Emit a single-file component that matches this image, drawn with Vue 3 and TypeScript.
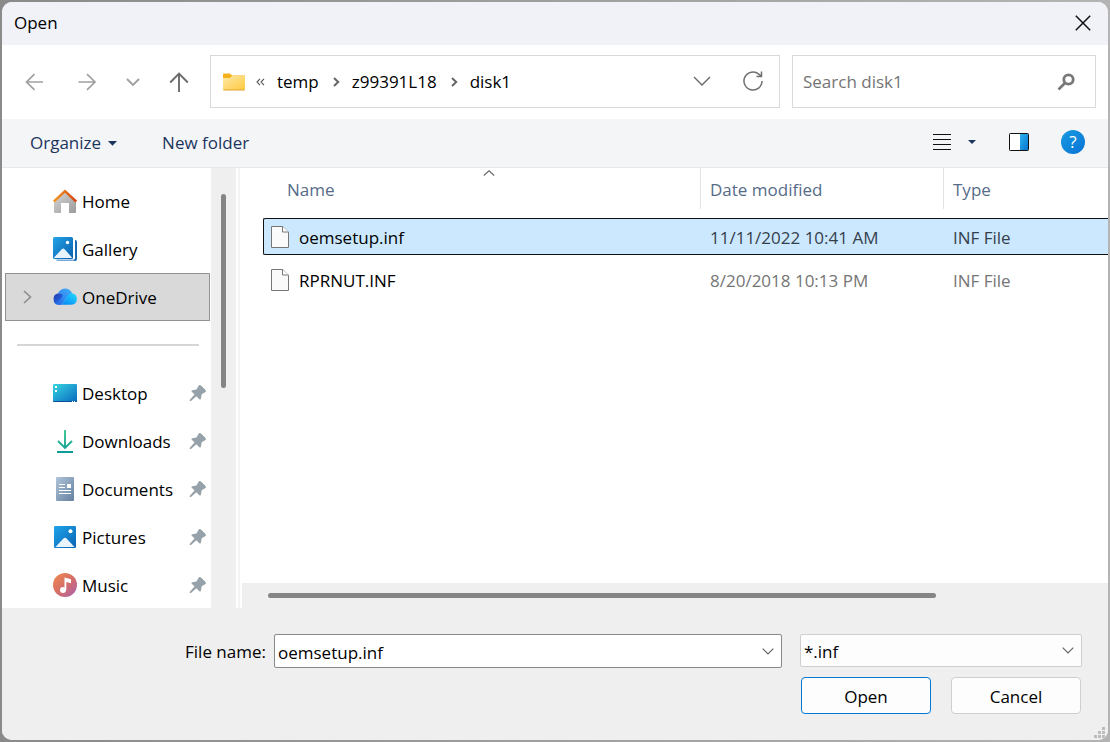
<script setup lang="ts">
import { ref } from 'vue'

interface Place {
  name: string
  icon: string
  pinned: boolean
}
interface FileRow {
  name: string
  modified: string
  type: string
}

const topPlaces: Place[] = [
  { name: 'Home', icon: 'home', pinned: false },
  { name: 'Gallery', icon: 'gallery', pinned: false },
  { name: 'OneDrive', icon: 'cloud', pinned: false },
]
const pinnedPlaces: Place[] = [
  { name: 'Desktop', icon: 'desktop', pinned: true },
  { name: 'Downloads', icon: 'downloads', pinned: true },
  { name: 'Documents', icon: 'documents', pinned: true },
  { name: 'Pictures', icon: 'pictures', pinned: true },
  { name: 'Music', icon: 'music', pinned: true },
]
const groups = [topPlaces, pinnedPlaces]
const crumbs = ['temp', 'z99391L18', 'disk1']
const files: FileRow[] = [
  { name: 'oemsetup.inf', modified: '11/11/2022 10:41 AM', type: 'INF File' },
  { name: 'RPRNUT.INF', modified: '8/20/2018 10:13 PM', type: 'INF File' },
]

const place = ref('OneDrive')
const fileName = ref('oemsetup.inf')
const filter = ref('*.inf')
const query = ref('')
</script>

<template>
  <div class="frame">
    <div class="dialog" role="dialog" aria-labelledby="dialog-title">
      <header class="titlebar">
        <h1 id="dialog-title">Open</h1>
        <button class="close" type="button" aria-label="Close">
          <svg width="16" height="16" viewBox="0 0 16 16"><path d="M.8.8l14.400 14.400M15.200.8L.8 15.200" stroke="#111" stroke-width="1.500" fill="none" /></svg>
        </button>
      </header>

      <div class="navbar">
        <div class="arrows">
          <button type="button" aria-label="Back">
            <svg width="20" height="20" viewBox="0 0 20 20" fill="none" stroke="#a0a0a0" stroke-width="1.700"><path d="M19 10H2.500M10.500 2.200L2.500 10l8 7.800" /></svg>
          </button>
          <button type="button" aria-label="Forward">
            <svg width="20" height="20" viewBox="0 0 20 20" fill="none" stroke="#a0a0a0" stroke-width="1.700"><path d="M1.500 10H18M10 2.200l8 7.800-8 7.800" /></svg>
          </button>
          <button type="button" aria-label="Recent locations">
            <svg width="14" height="20" viewBox="0 0 14 20" fill="none" stroke="#a0a0a0" stroke-width="1.900"><path d="M1 7l6 6 6-6" /></svg>
          </button>
          <button type="button" aria-label="Up">
            <svg width="20" height="20" viewBox="0 0 20 20" fill="none" stroke="#6b6b6b" stroke-width="1.900"><path d="M10 20V1.500M1.200 10.500L10 1.600l8.800 8.900" /></svg>
          </button>
        </div>
        <nav class="address" aria-label="Address">
          <svg class="folder" width="22" height="18" viewBox="0 0 22 18">
            <defs><linearGradient id="fold" x1="0" y1="0" x2="1" y2="1"><stop offset="0" stop-color="#ffe9a6" /><stop offset="1" stop-color="#fdc93f" /></linearGradient></defs>
            <path d="M0 1.500Q0 .5 1 .5h6l2 2h13v4H0z" fill="#f5b01c" />
            <path d="M0 5h7l2-2h13v13q0 1-1 1H1q-1 0-1-1z" fill="url(#fold)" />
            <path d="M.3 17h21.400" stroke="#e0a32c" />
          </svg>
          <svg class="more" width="9" height="8" viewBox="0 0 9 8" fill="none" stroke="#555" stroke-width="1.100"><path d="M4 .8L1 4l3 3.200M8 .8L5 4l3 3.200" /></svg>
          <template v-for="(crumb, i) in crumbs" :key="crumb">
            <svg v-if="i > 0" class="sep" width="7" height="10" viewBox="0 0 7 10" fill="none" stroke="#666" stroke-width="2"><path d="M1 1l4.200 4L1 9" /></svg>
            <button type="button" class="crumb">{{ crumb }}</button>
          </template>
          <button type="button" class="history" aria-label="Previous locations">
            <svg width="18" height="12" viewBox="0 0 18 12" fill="none" stroke="#666" stroke-width="1.300"><path d="M1 1l8 8 8-8" /></svg>
          </button>
          <button type="button" class="refresh" aria-label="Refresh">
            <svg width="20" height="22" viewBox="0 0 20 22" fill="none" stroke="#707070" stroke-width="1.500"><path d="M19 10a9 9 0 1 1-3.200-6.900L18.200 5M18.500.5V5.500H13.500" /></svg>
          </button>
        </nav>
        <div class="search">
          <input v-model="query" type="search" placeholder="Search disk1" aria-label="Search disk1" />
          <svg width="18" height="18" viewBox="0 0 18 18" fill="none" stroke="#777"><circle cx="11.500" cy="6.500" r="4.700" stroke-width="2.800" /><path d="M8 10l-6.500 6.500" stroke-width="2.700" /></svg>
        </div>
      </div>

      <div class="commands">
        <button type="button" class="organize">Organize
          <svg width="9" height="5" viewBox="0 0 9 5"><path d="M0 0h9L4.500 4.800z" fill="#1c355e" /></svg>
        </button>
        <button type="button">New folder</button>
        <div class="tools">
          <button type="button" class="view" aria-label="Change your view">
            <svg width="18" height="18" viewBox="0 0 18 18"><path d="M0 1.500h18M0 6.500h18M0 11.500h18M0 16.500h18" stroke="#111" /></svg>
            <svg width="8" height="4" viewBox="0 0 8 4"><path d="M0 0h8L4 4z" fill="#1c355e" /></svg>
          </button>
          <button type="button" class="preview" aria-label="Show the preview pane">
            <svg width="20" height="18" viewBox="0 0 20 18">
              <defs><linearGradient id="pane" x1="0" y1="0" x2="1" y2="1"><stop offset="0" stop-color="#2cb4ee" /><stop offset="1" stop-color="#0675d1" /></linearGradient></defs>
              <rect x=".5" y=".5" width="19" height="17" rx=".8" fill="#fff" stroke="#111" />
              <path d="M11 1h8v16h-8z" fill="url(#pane)" />
            </svg>
          </button>
          <button type="button" class="help" aria-label="Help">?</button>
        </div>
      </div>

      <main class="body">
        <aside class="sidebar">
          <nav class="places" aria-label="Places">
            <template v-for="(group, g) in groups" :key="g">
              <hr v-if="g > 0" />
              <button
                v-for="p in group"
                :key="p.name"
                type="button"
                class="place"
                :class="{ current: p.name === place }"
                @click="place = p.name"
              >
                <span class="expander">
                  <svg v-if="p.icon === 'cloud'" width="9" height="14" viewBox="0 0 9 14" fill="none" stroke="#8c8c8c" stroke-width="1.600"><path d="M1 1l6.500 6L1 13" /></svg>
                </span>
                <svg class="icon" width="24" height="24" viewBox="0 0 24 24">
                  <g v-if="p.icon === 'home'">
                    <defs>
                      <linearGradient id="wall" x1="0" y1="0" x2="1" y2="1"><stop offset="0" stop-color="#d8d8d8" /><stop offset="1" stop-color="#9a9a9a" /></linearGradient>
                      <linearGradient id="roof"><stop offset="0" stop-color="#f59a24" /><stop offset="1" stop-color="#d54410" /></linearGradient>
                    </defs>
                    <path d="M1 11.500L12 2l11 9.500V23q0 1-1 1h-6V14H8v10H2q-1 0-1-1z" fill="url(#wall)" />
                    <path d="M.8 12.500L12 2.200l11.200 10.300" fill="none" stroke="url(#roof)" stroke-width="2.400" />
                  </g>
                  <g v-else-if="p.icon === 'gallery'">
                    <defs><linearGradient id="sky" x1="0" y1="0" x2="1" y2="1"><stop offset="0" stop-color="#20a4e8" /><stop offset="1" stop-color="#0c5ead" /></linearGradient></defs>
                    <path d="M22 3q2 0 2 1.500v17.500q0 2-2 2h-1V3z" fill="#1768b5" />
                    <path d="M3 22.500h19l-1 1.500H5q-1.500 0-2-1.500z" fill="#75a7d8" />
                    <path d="M1.500 0h17Q20 0 20 1.500v19q0 1.500-1.500 1.500h-17Q0 22 0 20.500v-19Q0 0 1.500 0z" fill="url(#sky)" />
                    <path d="M20 0h2v22h-2z" fill="#fff" />
                    <path d="M1 20.500l8-8.500q1.200-1.200 2.400 0l7.600 8.500q-.5.500-1 .5H2q-.5 0-1-.5z" fill="#e8f3fd" />
                    <circle cx="14.500" cy="5.500" r="1.700" fill="#fff" />
                  </g>
                  <g v-else-if="p.icon === 'cloud'">
                    <defs>
                      <linearGradient id="cloudLeft" x1="0" y1="0" x2="1" y2="1"><stop offset="0" stop-color="#1c3fae" /><stop offset="1" stop-color="#2f74f5" /></linearGradient>
                      <linearGradient id="cloudTop" x1="1" y1="0" x2="0" y2="1"><stop offset="0" stop-color="#45b4fb" /><stop offset="1" stop-color="#1e62e6" /></linearGradient>
                      <linearGradient id="cloudFront" x1="1" y1="0" x2="0" y2="1"><stop offset="0" stop-color="#22dcff" /><stop offset="1" stop-color="#067cf5" /></linearGradient>
                    </defs>
                    <path d="M5.800 19.800A5.800 5.800 0 0 1 5.500 8.300H12l-4 11.500z" fill="url(#cloudLeft)" />
                    <path d="M5 8.400C8 2 16.500 1.800 19.200 8.300l-5.700 4.200L10 18q-1.500 1.800-4.200 1.800-3 0-4.600-2.300Q6 17 9 12q2-3.500-4-3.600z" fill="url(#cloudTop)" />
                    <path d="M6 19.800q3 0 5-3.300l3-5q2-3.200 5-3.200a5.800 5.800 0 0 1-.5 11.500z" fill="url(#cloudFront)" />
                  </g>
                  <g v-else-if="p.icon === 'desktop'">
                    <defs><linearGradient id="desk" x1="0" y1="0" x2="1" y2="1"><stop offset="0" stop-color="#38d5e2" /><stop offset="1" stop-color="#0869bf" /></linearGradient></defs>
                    <rect y="3" width="24" height="18" rx="1" fill="url(#desk)" />
                    <path d="M0 20h24q0 1-1 1H1q-1 0-1-1z" fill="#075095" />
                    <path d="M2 5h2v2H2zM2 9h2v2H2zM19 20h1v1h-1zM21 20h1v1h-1z" fill="#fff" />
                  </g>
                  <g v-else-if="p.icon === 'downloads'" fill="none" stroke-width="1.900">
                    <defs><linearGradient id="down" x1="0" y1="0" x2="0" y2="24" gradientUnits="userSpaceOnUse"><stop offset="0" stop-color="#41c98e" /><stop offset="1" stop-color="#0b9b98" /></linearGradient></defs>
                    <path d="M12 1V19M5 12l7 7 7-7M4 23h16" stroke="url(#down)" />
                  </g>
                  <g v-else-if="p.icon === 'documents'">
                    <defs><linearGradient id="doc" x1="0" y1="0" x2="1" y2="1"><stop offset="0" stop-color="#afc4da" /><stop offset="1" stop-color="#65809f" /></linearGradient></defs>
                    <rect x="3" width="18" height="24" rx="1" fill="url(#doc)" />
                    <path d="M6 7.500h6M6 10.500h6M6 13.500h12M6 16.500h12" stroke="#fff" />
                    <path d="M14 7h4v4h-4z" fill="#fff" />
                  </g>
                  <g v-else-if="p.icon === 'pictures'">
                    <defs><linearGradient id="pic" x1="0" y1="0" x2="1" y2="1"><stop offset="0" stop-color="#1fa5e9" /><stop offset="1" stop-color="#0b62b5" /></linearGradient></defs>
                    <rect x="1" y="1" width="22" height="22" rx="1.200" fill="url(#pic)" />
                    <path d="M2.500 22l8-8.500q1.500-1.300 3 0l8 8.500z" fill="#eaf4fd" />
                    <circle cx="17.500" cy="6.300" r="2" fill="#fff" />
                  </g>
                  <g v-else>
                    <defs><linearGradient id="music" x1="0" y1="0" x2="1" y2="1"><stop offset="0" stop-color="#f18b4d" /><stop offset=".5" stop-color="#d66f67" /><stop offset="1" stop-color="#a85fb0" /></linearGradient></defs>
                    <circle cx="12" cy="12" r="12" fill="url(#music)" />
                    <circle cx="10" cy="17" r="3" fill="#fff" />
                    <path d="M11.500 17V4.500l6.500 1.700v4l-4.700-1.200V17z" fill="#fff" />
                  </g>
                </svg>
                <span class="label">{{ p.name }}</span>
                <svg v-if="p.pinned" class="pin" width="18" height="18" viewBox="0 0 18 18"><path d="M9.700 1.500Q11 .5 12 1.500L16.500 6q1 1 0 2l-3.800 2.200-.8 4.500q-.5 1.500-1.600.5L7.300 12.300 2 17H.8v-1.200L5.500 10.500 2.800 7.800q-1-1 .4-1.500L7.500 5.500z" fill="#96a1a9" /></svg>
              </button>
            </template>
          </nav>
          <div class="vtrack"><div class="vthumb"></div></div>
        </aside>

        <section class="content" aria-label="Files">
          <div class="listing">
            <table>
              <colgroup><col /><col class="c-date" /><col class="c-type" /></colgroup>
              <thead>
                <tr>
                  <th scope="col" aria-sort="ascending">
                    <div class="head first">Name
                      <svg class="sort" width="12" height="6" viewBox="0 0 12 6" fill="none" stroke="#666" stroke-width="1.100"><path d="M.8 5.500L6 .8l5.200 4.700" /></svg>
                    </div>
                  </th>
                  <th scope="col"><div class="head">Date modified</div></th>
                  <th scope="col"><div class="head last">Type</div></th>
                </tr>
              </thead>
              <tbody>
                <tr v-for="f in files" :key="f.name" :class="{ selected: f.name === fileName }" @click="fileName = f.name">
                  <td>
                    <div class="cell file">
                      <svg width="18" height="22" viewBox="0 0 18 22"><path d="M.5.5h11.200l5.800 5.800v15.200H.5z" fill="#fafafa" stroke="#767676" /><path d="M11.500.5v5.500h6" fill="#fff" stroke="#767676" /></svg>
                      <span class="file-name">{{ f.name }}</span>
                    </div>
                  </td>
                  <td><div class="cell meta">{{ f.modified }}</div></td>
                  <td><div class="cell meta">{{ f.type }}</div></td>
                </tr>
              </tbody>
            </table>
          </div>
          <div class="htrack"><div class="hthumb"></div></div>
        </section>
      </main>

      <footer class="footer">
        <div class="fields">
          <label class="name-label" for="file-name">File name:</label>
          <div class="combo">
            <input id="file-name" v-model="fileName" type="text" />
            <button type="button" aria-label="Recent file names">
              <svg width="12" height="7" viewBox="0 0 12 7" fill="none" stroke="#666" stroke-width="1.200"><path d="M.7.7L6 6 11.300.7" /></svg>
            </button>
          </div>
          <div class="filter">
            <select v-model="filter" aria-label="File type"><option>*.inf</option></select>
            <svg width="12" height="7" viewBox="0 0 12 7" fill="none" stroke="#666" stroke-width="1.200"><path d="M.7.7L6 6 11.300.7" /></svg>
          </div>
        </div>
        <div class="actions">
          <button type="button" class="primary">Open</button>
          <button type="button">Cancel</button>
        </div>
        <svg class="grip" width="12" height="12" viewBox="0 0 12 12"><path d="M8 0h3v3H8zM4 4h3v3H4zM8 4h3v3H8zM0 8h3v3H0zM4 8h3v3H4zM8 8h3v3H8z" fill="#bdbdbd" /></svg>
      </footer>
    </div>
  </div>
</template>

<style>
body {
  margin: 0;
  background: #b4b4b4;
}
</style>

<style scoped>
* {
  box-sizing: border-box;
}
.frame {
  display: flex;
  height: 100vh;
  min-height: 480px;
  padding: 2px;
  background: linear-gradient(90deg, #8a8a8a, #b4b4b4);
  font-family: "Open Sans", "Noto Sans", sans-serif;
  font-size: 17px;
  line-height: 24px;
  color: #000;
}
.dialog {
  display: flex;
  flex: 1;
  flex-direction: column;
  min-width: 0;
  overflow: hidden;
  border-radius: 10px;
  background: #fff;
}
button, input, select {
  margin: 0;
  padding: 0;
  border: 0;
  background: none;
  color: inherit;
  font: inherit;
}
svg {
  display: block;
  flex: none;
}
.titlebar {
  display: flex;
  align-items: center;
  justify-content: space-between;
  height: 43px;
  flex: none;
  padding: 0 17px 2px 12px;
  background: #f0f2f8;
}
h1 {
  margin: 0;
  font: inherit;
}
.navbar {
  display: grid;
  grid-template-columns: 208px minmax(0, 570fr) minmax(0, 316fr);
  flex: none;
  align-items: center;
  height: 74px;
  padding: 0 12px 1px 0;
}
.arrows {
  display: flex;
  align-items: center;
  padding-left: 22px;
  gap: 33px;
}
.arrows button:nth-child(3) {
  margin-left: -4px;
  margin-right: -4px;
}
.address, .search {
  display: flex;
  align-items: center;
  height: 53px;
  border: 1px solid #d9d9d9;
}
.address {
  padding: 0 16px 0 12px;
}
.more {
  margin-left: 11px;
  margin-right: 12px;
}
.sep {
  margin: 0 12px 0 14px;
}
.history {
  margin-left: auto;
}
.refresh {
  margin-left: 32px;
}
.search {
  margin-left: 12px;
  padding: 0 20px 0 10px;
}
.search input {
  flex: 1;
  min-width: 0;
  outline: none;
  appearance: none;
}
.search input::placeholder {
  color: #757575;
  opacity: 1;
}
.commands {
  display: flex;
  align-items: center;
  flex: none;
  height: 49px;
  padding: 0 23px 0 28px;
  border-bottom: 1px solid #e6e7e9;
  background: #f4f5f7;
  color: #1c355e;
}
.organize, .view {
  display: flex;
  align-items: center;
  gap: 7px;
}
.organize {
  margin-right: 45px;
}
.tools {
  display: flex;
  align-items: center;
  margin-left: auto;
  padding-bottom: 2px;
}
.view {
  gap: 17px;
}
.preview {
  margin: 0 32px 0 33px;
}
.help {
  width: 24px;
  height: 24px;
  border-radius: 50%;
  background: linear-gradient(135deg, #199be2, #0873d5);
  color: #fff;
}
.body {
  display: flex;
  flex: 1;
  min-height: 0;
}
.sidebar {
  display: flex;
  flex: none;
  width: 234px;
}
.places {
  display: flex;
  flex: 1;
  flex-direction: column;
  overflow: hidden;
  padding: 9px 1px 0 3px;
}
.place {
  display: flex;
  flex: none;
  align-items: center;
  height: 48px;
  padding-right: 2px;
  border: 1px solid transparent;
  text-align: left;
}
.place.current {
  border-color: #929292;
  background: #d9d9d9;
}
.expander {
  width: 47px;
  padding-left: 17px;
}
.label {
  flex: 1;
  margin-left: 5px;
  padding-top: 2px;
}
hr {
  flex: none;
  width: 182px;
  height: 2px;
  margin: 23px 0 23px 12px;
  border: 0;
  background: #d6d6d6;
}
.vtrack {
  width: 25px;
  padding: 26px 10px 0;
  background: #efefef;
}
.vthumb {
  height: 194px;
  border-radius: 3px;
  background: #858585;
}
.content {
  display: flex;
  flex: 1;
  flex-direction: column;
  min-width: 0;
  margin-left: 2px;
  border-left: 2px solid #f3f3f3;
}
.listing {
  flex: 1;
  min-height: 0;
  overflow: hidden;
  padding-left: 23px;
}
table {
  width: 100%;
  border-spacing: 0;
  table-layout: fixed;
}
.c-date {
  width: 243px;
}
.c-type {
  width: 164px;
}
th, td {
  padding: 0;
  font-weight: 400;
  text-align: left;
}
th {
  padding-bottom: 9px;
}
td {
  padding-bottom: 6px;
}
.head {
  position: relative;
  height: 41px;
  padding: 10px 0 0 9px;
  border-right: 1px solid #e3e3e3;
  color: #566b88;
}
.head.first {
  padding-left: 24px;
}
.head.last {
  border-right: 0;
}
.sort {
  position: absolute;
  top: 2px;
  right: 205px;
}
.cell {
  display: flex;
  align-items: center;
  height: 37px;
  padding: 3px 9px 0;
  border: 1px solid transparent;
  border-width: 1px 0;
}
.cell.file {
  gap: 10px;
  padding: 0 8px;
  border-left-width: 1px;
}
.file svg {
  margin-left: -1px;
}
.file-name {
  padding-top: 3px;
}
.meta {
  color: #757575;
}
.selected .cell {
  border-color: #111;
  background: #cce8ff;
}
.selected .file {
  border-radius: 2px 0 0 2px;
}
.selected .meta {
  color: #35404c;
}
.htrack {
  flex: none;
  height: 25px;
  margin-left: 2px;
  padding: 10px 172px 0 26px;
  background: #efefef;
}
.hthumb {
  height: 5px;
  border-radius: 3px;
  background: #858585;
}
.footer {
  position: relative;
  flex: none;
  padding: 26px 26px 26px 0;
  background: #efefef;
}
.fields {
  display: flex;
  height: 34px;
}
.name-label {
  flex: none;
  width: 272px;
  padding: 6px 8px 0 0;
  text-align: right;
}
.combo {
  display: flex;
  flex: 1;
  min-width: 0;
  border: 1px solid #898989;
  border-radius: 2px;
  background: #fff;
}
.combo input {
  flex: 1;
  min-width: 0;
  padding: 3px 0 0 3px;
  outline: none;
}
.combo button {
  padding: 0 7px;
}
.filter {
  display: flex;
  align-items: center;
  width: 282px;
  height: 33px;
  margin-left: 18px;
  padding-right: 7px;
  border: 1px solid #cfcfcf;
  border-radius: 2px;
  background: #fdfdfd;
}
.filter select {
  flex: 1;
  padding: 2px 0 0 3px;
  outline: none;
  appearance: none;
}
.actions {
  display: flex;
  justify-content: flex-end;
  gap: 20px;
  margin: 9px 1px 0 0;
}
.actions button {
  width: 130px;
  height: 37px;
  padding-top: 2px;
  border: 1px solid #cfcfcf;
  border-radius: 4px;
  background: #fdfdfd;
}
.actions .primary {
  border-color: #0078d4;
}
.grip {
  position: absolute;
  right: 2px;
  bottom: 1px;
}
</style>
